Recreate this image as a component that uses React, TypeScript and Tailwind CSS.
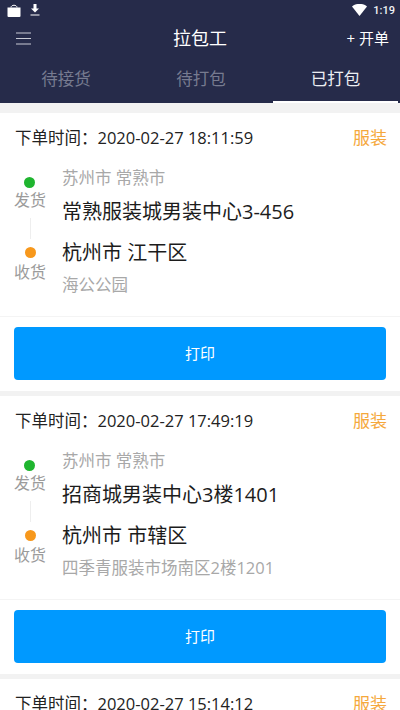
const font = { fontFamily: '"Open Sans", "Noto Sans CJK SC", sans-serif' };

function Order({ time, from, fromAddr, to, toAddr }: { time: string; from: string; fromAddr: string; to: string; toAddr: string }) {
  return (
    <div className="bg-white h-[278px] mb-[5px] flex flex-col shrink-0">
      <div className="flex justify-between items-center pl-[15px] pr-[13px] pt-[12px] h-[37px] text-[16.5px] leading-[22px] text-[#222]">
        <span>下单时间：{time}</span>
        <span className="text-[#f5a83c] text-[17px]">服装</span>
      </div>
      <div className="flex h-[166px]">
        <div className="w-[60px] flex flex-col items-center pt-[27px] shrink-0">
          <div className="w-[11px] h-[11px] rounded-full bg-[#1fb52f] mr-[1px]" />
          <div className="text-[16px] leading-[22px] text-[#9b9b9b] mt-[1px]">发货</div>
          <div className="w-px h-[21px] bg-[#eeeeee] mt-[7px] mb-[8px]" />
          <div className="w-[11px] h-[11px] rounded-full bg-[#f7981c]" />
          <div className="text-[16px] leading-[22px] text-[#9b9b9b] mt-[3px]">收货</div>
        </div>
        <div className="flex flex-col pt-[17px] pl-[2px]">
          <div className="text-[16.5px] leading-[22px] text-[#a8a8a8]">{from}</div>
          <div className="text-[20px] leading-[28px] text-[#1c1c1c] mt-[9px]">{fromAddr}</div>
          <div className="text-[20px] leading-[28px] text-[#1c1c1c] mt-[13px]">{to}</div>
          <div className="text-[16.5px] leading-[22px] text-[#a8a8a8] mt-[7px]">{toAddr}</div>
        </div>
      </div>
      <div className="border-t border-[#f4f4f4] px-[14px] pt-[10px]">
        <button className="w-full h-[53px] rounded-[4px] bg-[#0099ff] text-white text-[15px]">打印</button>
      </div>
    </div>
  );
}

export default function App() {
  return (
    <div className="w-[400px] h-[710px] overflow-hidden bg-[#f2f2f2] flex flex-col" style={font}>
      <div className="bg-[#262b4a] h-[103px] shrink-0 text-white flex flex-col">
        <div className="h-[20px] flex items-center justify-between pl-[7px] pr-[5px]">
          <div className="flex items-center gap-[9px]">
            <svg width="14" height="13" viewBox="0 0 14 13"><path d="M0.5 3.5h13V12a1 1 0 0 1-1 1H1.500a1 1 0 0 1-1-1z" fill="#fff" /><path d="M4 3.500C4 0.500 10 0.500 10 3.500" stroke="#fff" fill="none" strokeWidth="1" /></svg>
            <svg width="10" height="12" viewBox="0 0 10 12"><path d="M3.500 0h3v4.500H9L5 8.500 1 4.500h2.500z" fill="#fff" /><path d="M0.500 10.500h9v1h-9z" fill="#fff" /></svg>
          </div>
          <div className="flex items-center gap-[6px]">
            <svg width="15" height="12" viewBox="0 0 15 12"><path d="M0 2.500C4-1 11-1 15 2.500L7.500 12z" fill="#fff" /></svg>
            <span className="text-[11px] font-medium leading-none text-[#f2f3f6]" style={{ fontFamily: 'Roboto, sans-serif' }}>1:19</span>
          </div>
        </div>
        <div className="h-[36px] flex items-center justify-between pl-[16px] pr-[11px] relative">
          <svg width="15" height="13" viewBox="0 0 15 13"><path d="M0 1h15M0 6.500h15M0 12h15" stroke="#c9cbd5" strokeWidth="1" /></svg>
          <span className="absolute left-0 right-0 text-center text-[18px] leading-none pointer-events-none">拉包工</span>
          <span className="text-[15px]">+ 开单</span>
        </div>
        <div className="flex flex-1 text-[16.5px]">
          <div className="w-[132px] flex items-center justify-center text-[#777b90]">待接货</div>
          <div className="w-[138px] flex items-center justify-center text-[#777b90]">待打包</div>
          <div className="w-[125px] ml-[3px] flex items-center justify-center text-[#eceef2] pt-[2px] border-b-2 border-white">已打包</div>
        </div>
      </div>
      <div className="h-[10px] shrink-0" />
      <Order time="2020-02-27 18:11:59" from="苏州市 常熟市" fromAddr="常熟服装城男装中心3-456" to="杭州市 江干区" toAddr="海公公园" />
      <Order time="2020-02-27 17:49:19" from="苏州市 常熟市" fromAddr="招商城男装中心3楼1401" to="杭州市 市辖区" toAddr="四季青服装市场南区2楼1201" />
      <Order time="2020-02-27 15:14:12" from="" fromAddr="" to="" toAddr="" />
    </div>
  );
}
